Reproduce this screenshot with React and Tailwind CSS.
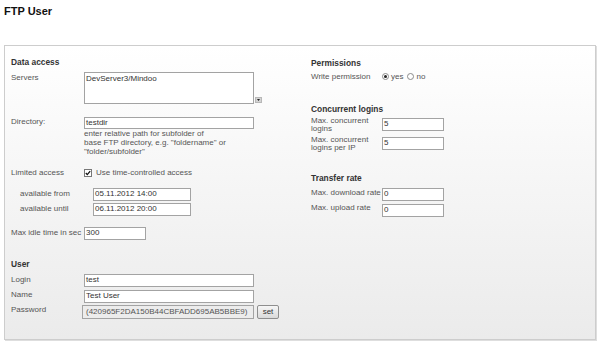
import React from "react";

function Field({ className, children }) {
  return (
    <div
      className={
        "box-border border border-[#a3a3a3] bg-white pl-[1px] leading-[10px] text-[8px] text-[#333] whitespace-nowrap overflow-hidden " +
        className
      }
    >
      {children}
    </div>
  );
}

function Radio({ checked }) {
  return (
    <div className="mt-[1px] w-[7px] h-[7px] rounded-full border border-[#8a8a8a] bg-white flex items-center justify-center box-border">
      {checked && <div className="w-[3px] h-[3px] rounded-full bg-[#222]" />}
    </div>
  );
}

export default function App() {
  return (
    <div className="w-[600px] h-[344px] bg-white overflow-hidden text-[8px] text-[#555] font-['Liberation_Sans',Arial,sans-serif]">
      <div className="pl-[4px] pt-[5px] leading-[13px] text-[11px] font-bold text-[#111]">FTP User</div>
      <div className="mt-[27px] ml-[4px] w-[592px] h-[295px] box-border border border-[#cdcdcd] shadow-[1px_1px_0_#dedede] bg-linear-to-b from-white to-[#ebebeb] flex">
        {/* Left column */}
        <div className="w-[300px] pl-[6px] flex flex-col">
          <div className="mt-[11px] leading-[10px] font-bold text-[8.4px] text-[#333]">Data access</div>
          <div className="mt-[5px] flex">
            <div className="w-[73px] pt-[1px] leading-[10px]">Servers</div>
            <Field className="w-[170px] h-[32px] pt-[1px]">DevServer3/Mindoo</Field>
            <div className="self-end mb-[1px] ml-[1px] w-[7px] h-[6px] bg-[#d4d4d4] border border-[#b8b8b8] box-border flex items-center justify-center">
              <svg width="3" height="2" viewBox="0 0 3 2">
                <path d="M0 0H3L1.5 2Z" fill="#222" />
              </svg>
            </div>
          </div>
          <div className="mt-[13px] flex">
            <div className="w-[73px] leading-[10px]">Directory:</div>
            <Field className="w-[170px] h-[12px]">testdir</Field>
          </div>
          <div className="ml-[73px] leading-[9px] text-[#555]">
            enter relative path for subfolder of
            <br />
            base FTP directory, e.g. "foldername" or
            <br />
            "folder/subfolder"
          </div>
          <div className="mt-[12px] flex items-start leading-[10px]">
            <div className="w-[73px]">Limited access</div>
            <div className="mt-[1px] w-[8px] h-[8px] box-border border border-[#777] bg-white flex items-center justify-center">
              <svg width="6" height="6" viewBox="0 0 6 6">
                <path d="M0.8 3L2.3 4.6L5.2 1.2" stroke="#111" strokeWidth="1.3" fill="none" />
              </svg>
            </div>
            <div className="ml-[4px]">Use time-controlled access</div>
          </div>
          <div className="mt-[10px] flex">
            <div className="w-[82px] pl-[9px] pt-[1px] leading-[10px]">available from</div>
            <Field className="w-[98px] h-[13px]">05.11.2012 14:00</Field>
          </div>
          <div className="mt-[2px] flex">
            <div className="w-[82px] pl-[9px] pt-[1px] leading-[10px]">available until</div>
            <Field className="w-[98px] h-[13px]">06.11.2012 20:00</Field>
          </div>
          <div className="mt-[11px] flex">
            <div className="w-[73px] pt-[1px] leading-[10px] whitespace-nowrap">Max idle time in sec</div>
            <Field className="w-[62px] h-[13px]">300</Field>
          </div>
          <div className="mt-[19px] leading-[10px] font-bold text-[8.4px] text-[#333]">User</div>
          <div className="mt-[5px] flex">
            <div className="w-[73px] pt-[1px] leading-[10px]">Login</div>
            <Field className="w-[170px] h-[13px]">test</Field>
          </div>
          <div className="mt-[3px] flex">
            <div className="w-[73px] leading-[10px]">Name</div>
            <Field className="w-[170px] h-[13px]">Test User</Field>
          </div>
          <div className="mt-[2px] flex">
            <div className="w-[71px] leading-[10px]">Password</div>
            <div className="w-[172px] h-[14px] box-border border border-[#a3a3a3] bg-[#ececec] pl-[3px] pt-[1px] leading-[10px] text-[8px] text-[#555] whitespace-nowrap overflow-hidden">
              (420965F2DA150B44CBFADD695AB5BBE9)
            </div>
            <div className="ml-[3px] w-[22px] h-[14px] box-border border border-[#8e8e8e] rounded-[2px] bg-linear-to-b from-[#f6f6f6] to-[#dadada] flex items-center justify-center leading-[10px] text-[#333]">
              set
            </div>
          </div>
        </div>

        {/* Right column */}
        <div className="flex-1 pl-[6px] flex flex-col">
          <div className="mt-[12px] leading-[10px] font-bold text-[8.4px] text-[#333]">Permissions</div>
          <div className="mt-[4px] flex items-start leading-[10px]">
            <div className="w-[71px]">Write permission</div>
            <Radio checked />
            <div className="ml-[2px]">yes</div>
            <div className="ml-[4px]">
              <Radio />
            </div>
            <div className="ml-[2px]">no</div>
          </div>
          <div className="mt-[22px] leading-[10px] font-bold text-[8.4px] text-[#333]">Concurrent logins</div>
          <div className="mt-[4px] flex items-start">
            <div className="w-[71px] leading-[8px] -mt-[1px]">
              Max. concurrent
              <br />
              logins
            </div>
            <Field className="w-[62px] h-[13px]">5</Field>
          </div>
          <div className="mt-[4px] flex items-start">
            <div className="w-[71px] leading-[8px] -mt-[1px]">
              Max. concurrent
              <br />
              logins per IP
            </div>
            <Field className="w-[62px] h-[13px]">5</Field>
          </div>
          <div className="mt-[21px] leading-[10px] font-bold text-[8.4px] text-[#333]">Transfer rate</div>
          <div className="mt-[5px] flex items-start">
            <div className="w-[71px] leading-[10px] whitespace-nowrap">Max. download rate</div>
            <Field className="w-[62px] h-[13px]">0</Field>
          </div>
          <div className="mt-[3px] flex items-start">
            <div className="w-[71px] leading-[10px] -mt-[1px]">Max. upload rate</div>
            <Field className="w-[62px] h-[13px]">0</Field>
          </div>
        </div>
      </div>
    </div>
  );
}
